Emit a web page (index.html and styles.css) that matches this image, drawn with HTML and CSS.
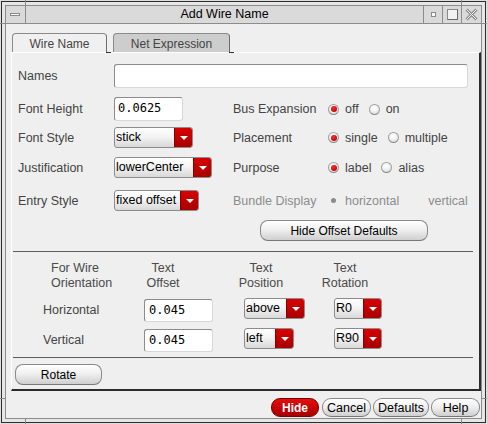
FILE: index.html
```html
<!DOCTYPE html>
<html>
<head>
<meta charset="utf-8">
<title>Add Wire Name</title>
<link rel="stylesheet" href="styles.css">
</head>
<body>
<div class="screen">
  <div class="window">
    <div class="inner">
      <div class="titlebar">
        <div class="tb-menu"><span class="bar-icon"></span></div>
        <div class="tb-title">Add Wire Name</div>
        <div class="tb-btn tb-min"><span class="min-icon"></span></div>
        <div class="tb-btn tb-max"><span class="max-icon"></span></div>
        <div class="tb-btn tb-close">
          <svg width="13" height="13" viewBox="0 0 13 13">
            <path d="M1.5 1.5L11.5 11.5M11.5 1.5L1.5 11.5" stroke="#8a8a8a" stroke-width="3" fill="none"/>
            <path d="M1.5 1.5L11.5 11.5M11.5 1.5L1.5 11.5" stroke="#f4f4f4" stroke-width="1" fill="none"/>
          </svg>
        </div>
      </div>
      <div class="client">
        <div class="tabs">
          <div class="tab active">Wire Name</div>
          <div class="tab net">Net Expression</div>
        </div>
        <div class="panel">
          <div class="frow r1">
            <span class="lbl">Names</span>
            <div class="field names"></div>
          </div>
          <div class="frow r2">
            <span class="lbl">Font Height</span>
            <div class="ctl"><div class="field fh">0.0625</div></div>
            <span class="lbl2">Bus Expansion</span>
            <div class="radios">
              <span class="opt"><span class="radio on"></span>off</span>
              <span class="opt"><span class="radio"></span>on</span>
            </div>
          </div>
          <div class="frow r3">
            <span class="lbl">Font Style</span>
            <div class="ctl"><div class="dd w-stick"><span class="val">stick</span><span class="arr"></span></div></div>
            <span class="lbl2">Placement</span>
            <div class="radios">
              <span class="opt"><span class="radio on"></span>single</span>
              <span class="opt"><span class="radio"></span>multiple</span>
            </div>
          </div>
          <div class="frow r4">
            <span class="lbl">Justification</span>
            <div class="ctl"><div class="dd w-lc"><span class="val">lowerCenter</span><span class="arr"></span></div></div>
            <span class="lbl2">Purpose</span>
            <div class="radios">
              <span class="opt"><span class="radio on"></span>label</span>
              <span class="opt"><span class="radio"></span>alias</span>
            </div>
          </div>
          <div class="frow r5">
            <span class="lbl">Entry Style</span>
            <div class="ctl"><div class="dd w-fo"><span class="val">fixed offset</span><span class="arr"></span></div></div>
            <span class="lbl2 dis">Bundle Display</span>
            <div class="radios dis">
              <span class="opt"><span class="radio-dis"><span class="dot"></span></span>horizontal</span>
              <span class="opt opt-v"><span class="radio-dis"></span>vertical</span>
            </div>
          </div>
          <div class="frow r6">
            <div class="pill hod">Hide Offset Defaults</div>
          </div>
          <div class="sep sep1"></div>
          <div class="heads">
            <div class="hA">For Wire<br>Orientation</div>
            <div class="hB">Text<br>Offset</div>
            <div class="hC">Text<br>Position</div>
            <div class="hD">Text<br>Rotation</div>
          </div>
          <div class="orow orow1">
            <span class="olbl">Horizontal</span>
            <div><div class="field off">0.045</div></div>
            <div><div class="dd w-above"><span class="val">above</span><span class="arr"></span></div></div>
            <div><div class="dd w-r"><span class="val">R0</span><span class="arr"></span></div></div>
          </div>
          <div class="orow orow2">
            <span class="olbl">Vertical</span>
            <div><div class="field off">0.045</div></div>
            <div><div class="dd w-left"><span class="val">left</span><span class="arr"></span></div></div>
            <div><div class="dd w-r"><span class="val">R90</span><span class="arr"></span></div></div>
          </div>
          <div class="sep sep2"></div>
          <div class="rot-row">
            <div class="pill rotate">Rotate</div>
          </div>
        </div>
        <div class="footer">
          <div class="pill fbtn hide">Hide</div>
          <div class="pill fbtn cancel">Cancel</div>
          <div class="pill fbtn defaults">Defaults</div>
          <div class="pill fbtn help">Help</div>
        </div>
      </div>
    </div>
  </div>
  <span class="tick t-top-l"></span>
  <span class="tick t-top-r"></span>
  <span class="tick t-bot-l"></span>
  <span class="tick t-bot-r"></span>
  <span class="tick t-l-top"></span>
  <span class="tick t-r-top"></span>
  <span class="tick t-l-bot"></span>
  <span class="tick t-r-bot"></span>
</div>
</body>
</html>
```

FILE: styles.css
```css
* { box-sizing: border-box; }
html, body { margin: 0; padding: 0; }
body {
  width: 487px;
  height: 424px;
  overflow: hidden;
  background: #dedede;
  font-family: "Liberation Sans", Arial, sans-serif;
  font-size: 12.5px;
  color: #444444;
}
.screen {
  position: relative;
  width: 487px;
  height: 424px;
  padding: 1px;
  background: #dedede;
}
.window {
  width: 485px;
  height: 422px;
  border: 1px solid #2e2e2e;
  background: #e6e6e6;
  padding: 3px;
}
.inner {
  height: 100%;
  border: 1px solid #8c8c8c;
  display: flex;
  flex-direction: column;
  background: #efefef;
}

/* title bar */
.titlebar {
  height: 18px;
  flex: none;
  display: flex;
  background: #dadada;
  border-bottom: 1px solid #8c8c8c;
}
.tb-menu {
  width: 20px;
  border-right: 1px solid #8c8c8c;
  display: flex;
  align-items: center;
  justify-content: center;
}
.bar-icon {
  width: 10px;
  height: 3px;
  border: 1px solid #8a8a8a;
  background: #fafafa;
  margin-right: 1px;
}
.tb-title {
  flex: 1;
  text-align: center;
  line-height: 17px;
  color: #000;
  font-size: 12.5px;
}
.tb-btn {
  border-left: 1px solid #8c8c8c;
  display: flex;
  align-items: center;
  justify-content: center;
}
.tb-min, .tb-max { width: 19px; }
.tb-close { width: 20px; }
.min-icon {
  width: 5px;
  height: 5px;
  border: 1px solid #8a8a8a;
  background: #fafafa;
}
.max-icon {
  width: 11px;
  height: 11px;
  border: 1px solid #8a8a8a;
  border-right-color: #6a6a6a;
  border-bottom-color: #6a6a6a;
  background: #f2f2f2;
}

/* client */
.client {
  flex: 1;
  display: flex;
  flex-direction: column;
  padding: 9px 0 0 5px;
}
.tabs {
  display: flex;
  height: 19px;
  padding-left: 1px;
}
.tab {
  position: relative;
  height: 19px;
  border: 1px solid #8a8a8a;
  border-bottom: none;
  border-right-color: #6c6c6c;
  border-radius: 4px 4px 0 0;
  background: #cdcdcd;
  color: #444;
  font-size: 12px;
  display: flex;
  align-items: center;
  justify-content: center;
  padding-top: 1px;
}
.tab::after {
  content: "";
  position: absolute;
  left: 100%;
  bottom: -1px;
  width: 5px;
  height: 1px;
  background: #333;
}
.tab.active {
  width: 95px;
  background: #f0f0f0;
}
.tab.net {
  width: 117px;
  margin-left: 6px;
}

.panel {
  width: 470px;
  height: 339px;
  flex: none;
  background: #efefef;
  border-style: solid;
  border-width: 1px 2px 2px 1px;
  border-color: #ffffff #2b2b2b #2b2b2b #ffffff;
  padding-top: 11px;
}
.frow {
  display: flex;
  align-items: center;
  padding-left: 6px;
}
.r1, .r2 { height: 24px; }
.r2 { margin-top: 9px; }
.r3 { margin-top: 6px; height: 21px; }
.r4 { margin-top: 9px; height: 21px; }
.r5 { margin-top: 12px; height: 21px; }
.r6 { margin-top: 9px; height: 21px; padding-left: 248px; }

.lbl { width: 96px; flex: none; }
.ctl { width: 119px; flex: none; display: flex; }
.lbl2 { width: 95px; flex: none; }
.radios { display: flex; align-items: center; }
.opt {
  display: flex;
  align-items: center;
  margin-right: 10px;
}
.radio {
  width: 11px;
  height: 11px;
  border-radius: 50%;
  border: 1px solid #a0a0a0;
  border-bottom-color: #8a8a8a;
  background: radial-gradient(circle at 45% 35%, #ffffff 0%, #f2f2f2 45%, #c8c8c8 100%);
  margin-right: 6px;
  display: flex;
  align-items: center;
  justify-content: center;
  flex: none;
}
.radio.on::before {
  content: "";
  width: 6px;
  height: 6px;
  border-radius: 50%;
  background: radial-gradient(circle at 40% 35%, #ff3030, #c80000 70%);
}
.dis { color: #8c8c8c; }
.radio-dis {
  width: 11px;
  height: 11px;
  margin-right: 6px;
  display: flex;
  align-items: center;
  justify-content: center;
  flex: none;
}
.radio-dis .dot {
  width: 5px;
  height: 5px;
  border-radius: 50%;
  background: #8a8a8a;
}
.opt-v { margin-left: 2px; }

/* fields */
.field {
  height: 24px;
  background: #ffffff;
  border: 1px solid;
  border-color: #8c8c8c #d8d8d8 #d8d8d8 #8c8c8c;
  border-radius: 3px;
  font-family: "DejaVu Sans Mono", "Liberation Mono", monospace;
  font-size: 12px;
  color: #000;
  padding-left: 3px;
  line-height: 21px;
}
.names { width: 354px; }
.fh { width: 69px; }
.off { width: 69px; padding-left: 4px; }

/* dropdowns */
.dd {
  display: flex;
  height: 21px;
  border: 1px solid #8c8c8c;
  border-radius: 3px;
  overflow: hidden;
  background: linear-gradient(#ffffff, #f4f4f4 45%, #d8d8d8);
  color: #000;
}
.dd .val {
  flex: 1;
  padding-left: 1px;
  line-height: 19px;
  white-space: nowrap;
}
.dd .arr {
  width: 18px;
  flex: none;
  background: linear-gradient(#d80000, #c00000 50%, #a80000);
  border-left: 1px solid #8a0000;
  display: flex;
  align-items: center;
  justify-content: center;
}
.dd .arr::before {
  content: "";
  width: 0;
  height: 0;
  border-left: 4px solid transparent;
  border-right: 4px solid transparent;
  border-top: 4px solid #ffffff;
}
.w-stick { width: 79px; }
.w-lc { width: 98px; }
.w-fo { width: 85px; }
.w-above { width: 61px; }
.w-left { width: 50px; }
.w-r { width: 48px; }

/* pill buttons */
.pill {
  display: flex;
  align-items: center;
  justify-content: center;
  border: 1px solid #8a8a8a;
  border-bottom-color: #777;
  background: linear-gradient(#ffffff, #f0f0f0 45%, #cfcfcf);
  color: #000;
  font-size: 12px;
  white-space: nowrap;
}
.hod { width: 168px; height: 21px; border-radius: 8px; }
.rotate { width: 87px; height: 21px; border-radius: 8px; }

/* lower section */
.sep {
  height: 1px;
  width: 460px;
  margin-left: 1px;
  background: #5e5e5e;
}
.sep1 { margin-top: 10px; }
.sep2 { margin-top: 5px; }
.heads {
  display: flex;
  margin-top: 9px;
  line-height: 15px;
  color: #4a4a4a;
}
.hA { margin-left: 39px; width: 80px; }
.hB { margin-left: 2px; width: 60px; text-align: center; }
.hC { margin-left: 38px; width: 60px; text-align: center; }
.hD { margin-left: 24px; width: 60px; text-align: center; }
.orow {
  display: grid;
  grid-template-columns: 132px 100px 90px auto;
  height: 24px;
  align-items: start;
}
.orow1 { margin-top: 7px; }
.orow2 { margin-top: 6px; }
.olbl { padding-left: 31px; line-height: 24px; }
.orow .field { margin-top: 1px; height: 23px; line-height: 20px; }
.rot-row { margin-top: 6px; padding-left: 3px; }

/* footer */
.footer {
  display: flex;
  justify-content: flex-end;
  gap: 2px;
  margin-top: 7px;
  padding-right: 1px;
}
.fbtn { height: 19px; border-radius: 9px; font-size: 12.5px; }
.hide {
  width: 48px;
  margin-right: 1px;
  background: linear-gradient(#e41010, #c80000 50%, #a80000);
  border-color: #7a0000;
  color: #fff;
  font-weight: bold;
  font-size: 12px;
}
.cancel { width: 49px; }
.defaults { width: 56px; }
.help { width: 49px; }

/* frame resize marks */
.tick { position: absolute; background: #8a8a8a; }
.t-top-l { left: 25px; top: 0; width: 1px; height: 5px; }
.t-top-r { left: 461px; top: 0; width: 1px; height: 5px; }
.t-bot-l { left: 25px; top: 419px; width: 1px; height: 5px; }
.t-bot-r { left: 461px; top: 419px; width: 1px; height: 5px; }
.t-l-top { left: 0; top: 23px; width: 5px; height: 1px; }
.t-r-top { left: 482px; top: 23px; width: 5px; height: 1px; }
.t-l-bot { left: 0; top: 398px; width: 5px; height: 1px; }
.t-r-bot { left: 482px; top: 398px; width: 5px; height: 1px; }
```
